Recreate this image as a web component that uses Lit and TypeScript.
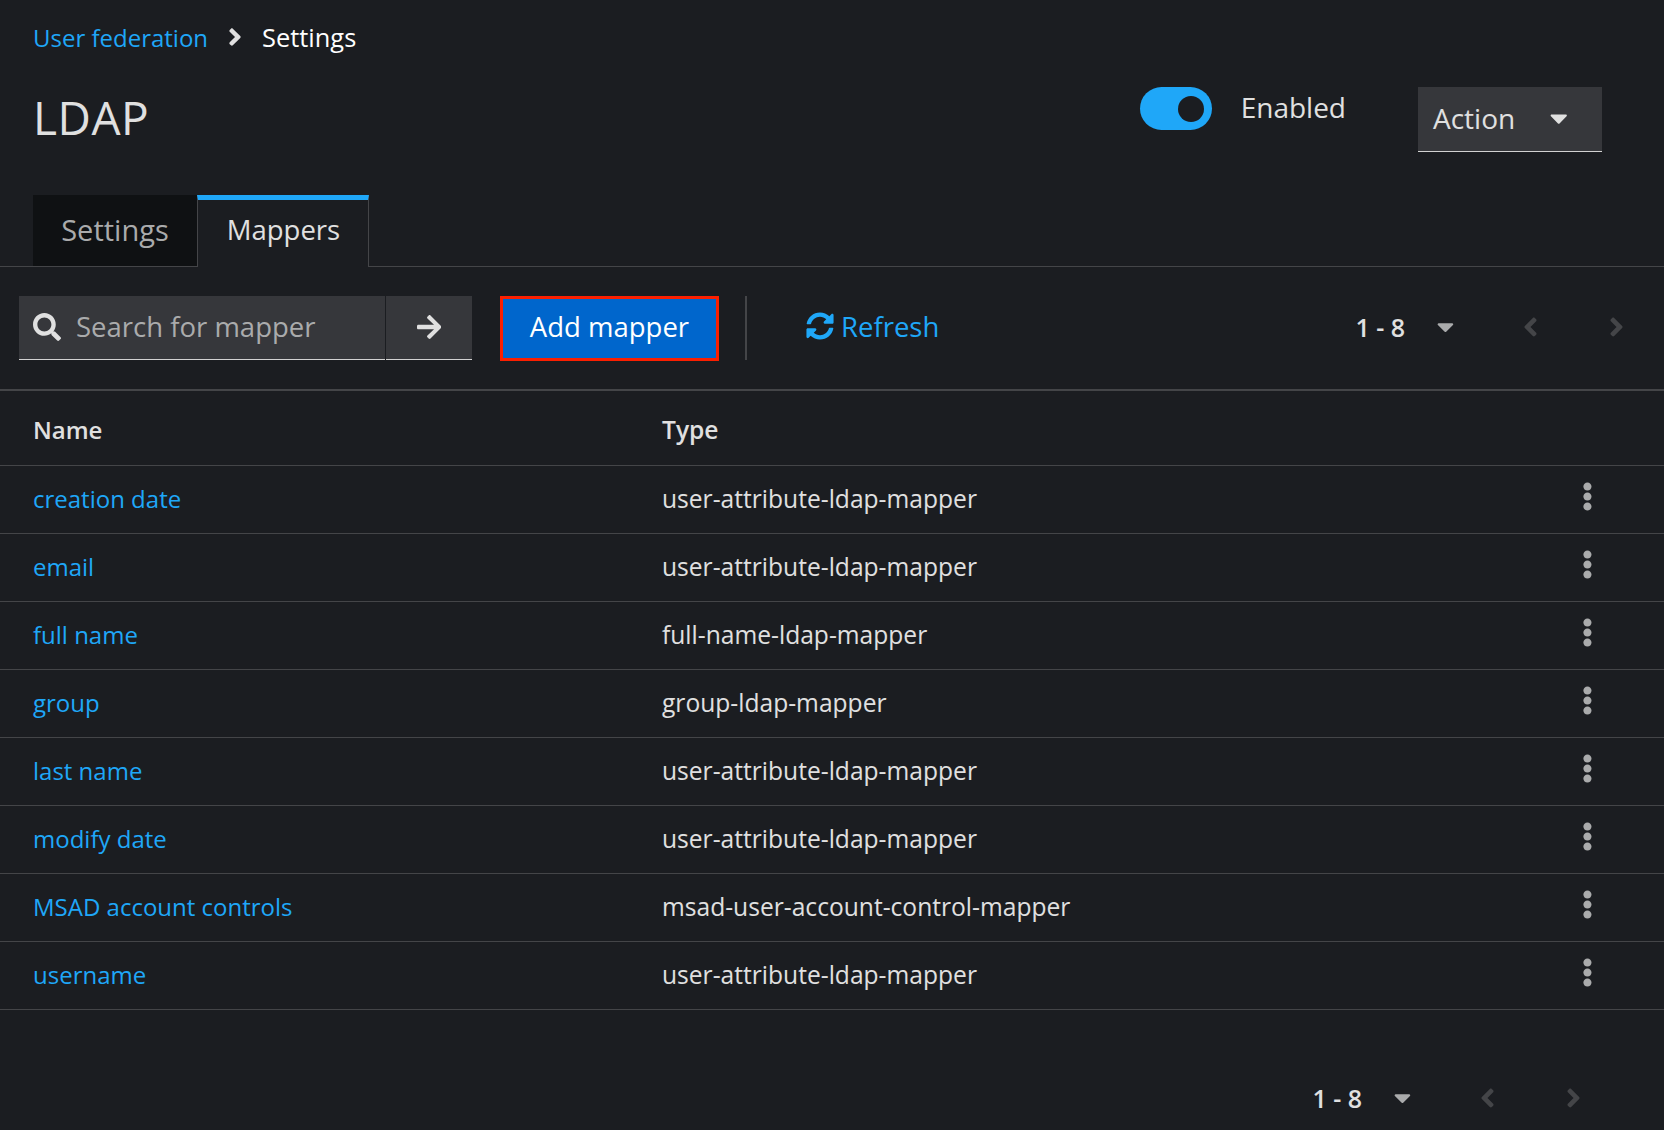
import { LitElement, html, css, svg } from "lit";
import { customElement } from "lit/decorators.js";

const ICONS = {
  search: { box: "0 0 512 512", d: "M505 442.7L405.3 343c-4.5-4.5-10.6-7-17-7H372c27.6-35.3 44-79.7 44-128C416 93.1 322.9 0 208 0S0 93.1 0 208s93.1 208 208 208c48.3 0 92.7-16.4 128-44v16.3c0 6.4 2.5 12.5 7 17l99.7 99.7c9.4 9.4 24.6 9.4 33.9 0l28.3-28.3c9.4-9.4 9.4-24.6.1-34zM208 336c-70.7 0-128-57.2-128-128 0-70.7 57.2-128 128-128 70.7 0 128 57.2 128 128 0 70.7-57.2 128-128 128z" },
  arrow: { box: "0 0 448 512", d: "M190.5 66.9l22.2-22.2c9.4-9.4 24.6-9.4 33.9 0L441 239c9.4 9.4 9.4 24.6 0 33.9L246.6 467.3c-9.4 9.4-24.6 9.4-33.9 0l-22.2-22.2c-9.5-9.5-9.3-25 .4-34.3L311.4 296H24c-13.3 0-24-10.7-24-24v-32c0-13.3 10.7-24 24-24h287.4L190.9 101.2c-9.8-9.3-10-24.8-.4-34.3z" },
  sync: { box: "0 0 512 512", d: "M370.72 133.28C339.458 104.008 298.888 87.962 255.848 88c-77.458.068-144.328 53.178-162.791 126.85-1.344 5.363-6.122 9.15-11.651 9.15H24.103c-7.498 0-13.194-6.807-11.807-14.176C33.933 94.924 134.813 8 256 8c66.448 0 126.791 26.136 171.315 68.685L463.03 40.97C478.149 25.851 504 36.559 504 57.941V192c0 13.255-10.745 24-24 24H345.941c-21.382 0-32.09-25.851-16.971-40.971l41.75-41.749zM32 296h134.059c21.382 0 32.09 25.851 16.971 40.971l-41.75 41.75c31.262 29.273 71.835 45.319 114.876 45.28 77.418-.07 144.315-53.144 162.787-126.849 1.344-5.363 6.122-9.15 11.651-9.15h57.304c7.498 0 13.194 6.807 11.807 14.176C478.067 417.076 377.187 504 256 504c-66.448 0-126.791-26.136-171.315-68.685L48.97 471.03C33.851 486.149 8 475.441 8 454.059V320c0-13.255 10.745-24 24-24z" },
  caret: { box: "0 0 320 512", d: "M31.3 192h257.3c17.8 0 26.7 21.5 14.1 34.1L174.1 354.8c-7.8 7.8-20.5 7.8-28.3 0L17.2 226.1C4.6 213.5 13.5 192 31.3 192z" },
  right: { box: "0 0 256 512", d: "M224.3 273l-136 136c-9.4 9.4-24.6 9.4-33.9 0l-22.6-22.6c-9.4-9.4-9.4-24.6 0-33.9l96.4-96.4-96.4-96.4c-9.4-9.4-9.4-24.6 0-33.9L54.3 103c9.4-9.4 24.6-9.4 33.9 0l136 136c9.5 9.4 9.5 24.6.1 34z" },
  left: { box: "0 0 256 512", d: "M31.7 239l136-136c9.4-9.4 24.6-9.4 33.9 0l22.6 22.6c9.4 9.4 9.4 24.6 0 33.9L127.9 256l96.4 96.4c9.4 9.4 9.4 24.6 0 33.9L201.7 409c-9.4 9.4-24.6 9.4-33.9 0l-136-136c-9.5-9.4-9.5-24.6-.1-34z" },
  kebab: { box: "0 0 192 512", d: "M96 184c39.8 0 72 32.2 72 72s-32.2 72-72 72-72-32.2-72-72 32.2-72 72-72zM24 80c0 39.8 32.2 72 72 72s72-32.2 72-72S135.8 8 96 8 24 40.2 24 80zm0 352c0 39.8 32.2 72 72 72s72-32.2 72-72-32.2-72-72-72-72 32.2-72 72z" },
};

type IconName = keyof typeof ICONS;

const icon = (name: IconName, cls = "") =>
  html`<svg class="icon ${cls}" viewBox=${ICONS[name].box} fill="currentColor">${svg`<path d=${ICONS[name].d}></path>`}</svg>`;

const MAPPERS = [
  { name: "creation date", type: "user-attribute-ldap-mapper" },
  { name: "email", type: "user-attribute-ldap-mapper" },
  { name: "full name", type: "full-name-ldap-mapper" },
  { name: "group", type: "group-ldap-mapper" },
  { name: "last name", type: "user-attribute-ldap-mapper" },
  { name: "modify date", type: "user-attribute-ldap-mapper" },
  { name: "MSAD account controls", type: "msad-user-account-control-mapper" },
  { name: "username", type: "user-attribute-ldap-mapper" },
];

@customElement("app-root")
export class AppRoot extends LitElement {
  static styles = css`
    :host {
      display: block;
      height: 1130px;
      overflow: hidden;
      background: #1b1d21;
      color: #e0e0e0;
      font-family: "Open Sans", "Liberation Sans", sans-serif;
      font-size: 27.5px;
    }

    .icon {
      display: block;
      height: 28px;
      flex: none;
    }

    a {
      color: #1fa7f8;
      text-decoration: none;
    }

    .breadcrumb {
      display: flex;
      align-items: center;
      height: 42px;
      padding: 16px 33px 0;
      font-size: 25.4px;
      color: #fff;
    }

    .breadcrumb a {
      font-size: 24px;
    }

    .breadcrumb .sep {
      margin: 0 20px;
      color: #e0e0e0;
    }

    .head {
      display: flex;
      align-items: flex-start;
      height: 65px;
      margin-top: 29px;
      padding: 0 62px 0 33px;
    }

    h1 {
      margin: 0 auto 0 0;
      font-size: 46px;
      font-weight: 500;
      letter-spacing: 0.5px;
      line-height: 60px;
    }

    .toggle {
      display: flex;
      justify-content: flex-end;
      align-items: center;
      width: 72px;
      height: 43px;
      padding-right: 8px;
      box-sizing: border-box;
      border-radius: 22px;
      background: #1fa7f8;
    }

    .toggle span {
      width: 26px;
      height: 26px;
      border-radius: 50%;
      background: #1b1d21;
    }

    .enabled {
      margin: 0 72px 0 29px;
      font-size: 28px;
      line-height: 41px;
    }

    .action {
      display: flex;
      align-items: center;
      justify-content: space-between;
      width: 184px;
      height: 65px;
      padding: 0 35px 2px 15px;
      box-sizing: border-box;
      background: #36373b;
      border-bottom: 1px solid #d2d2d2;
      font-size: 28px;
    }

    .tabs {
      display: flex;
      height: 71px;
      margin-top: 43px;
      padding-left: 33px;
      border-bottom: 1px solid #444548;
    }

    .tab {
      display: flex;
      align-items: center;
      justify-content: center;
      height: 71px;
      box-sizing: border-box;
    }

    .tab.off {
      width: 164px;
      padding-bottom: 2px;
      background: #0f1113;
      color: #aaabac;
      font-size: 29px;
    }

    .tab.on {
      width: 172px;
      height: 72px;
      padding: 0 0 8px 1px;
      background: #1b1d21;
      border-top: 5px solid #1fa7f8;
      border-left: 1px solid #444548;
      border-right: 1px solid #444548;
    }

    .toolbar {
      display: flex;
      align-items: flex-start;
      height: 65px;
      padding: 29px 0 28px 19px;
      border-bottom: 2px solid #444548;
    }

    .search {
      display: flex;
      align-items: center;
      width: 366px;
      height: 64px;
      padding: 0 0 2px 14px;
      box-sizing: border-box;
      background: #36373b;
      border-bottom: 1px solid #d2d2d2;
      color: #aaabac;
    }

    .search .icon {
      color: #e0e0e0;
      margin-right: 15px;
    }

    .go {
      display: flex;
      align-items: center;
      justify-content: center;
      width: 86px;
      height: 64px;
      margin-left: 1px;
      padding-bottom: 2px;
      box-sizing: border-box;
      background: #36373b;
      border-bottom: 1px solid #d2d2d2;
    }

    .add {
      display: flex;
      align-items: center;
      justify-content: center;
      width: 219px;
      height: 65px;
      margin-left: 28px;
      padding-bottom: 5px;
      box-sizing: border-box;
      border: 3px solid #fb1f00;
      background: #06c;
      color: #fff;
    }

    .divider {
      width: 2px;
      height: 64px;
      margin: 0 59px 0 26px;
      background: #444548;
    }

    .refresh {
      display: flex;
      align-items: center;
      gap: 7px;
      height: 60px;
    }

    .pager {
      display: flex;
      align-items: center;
      height: 61px;
      font-size: 25px;
      font-weight: 600;
    }

    .pager .caret {
      height: 27px;
      margin-left: 32px;
      color: #aaabac;
    }

    .pager .nav {
      height: 30px;
      color: #444548;
    }

    .pager .prev {
      margin-left: 69px;
    }

    .pager .next {
      margin-left: 71px;
    }

    .toolbar .pager {
      margin-left: auto;
      padding-right: 40px;
    }

    table {
      width: 100%;
      border-collapse: collapse;
      table-layout: fixed;
      font-size: 24.6px;
    }

    th,
    td {
      height: 65px;
      padding: 0 0 2px;
      text-align: left;
      border-bottom: 1px solid #444548;
    }

    td a {
      font-size: 24px;
    }

    th {
      height: 72px;
      padding: 2px 0 0;
      font-weight: 600;
    }

    th.name {
      font-size: 24px;
    }

    .name {
      width: 662px;
      padding-left: 33px;
      box-sizing: border-box;
    }

    .kebab {
      width: 82px;
    }

    .kebab .icon {
      height: 29px;
      margin-bottom: 4px;
      color: #aaabac;
    }

    .foot {
      display: flex;
      justify-content: flex-end;
      padding: 57px 83px 0 0;
    }
  `;

  renderPager() {
    return html`
      <div class="pager">
        <span>1 - 8</span>
        ${icon("caret", "caret")}
        ${icon("left", "nav prev")}
        ${icon("right", "nav next")}
      </div>
    `;
  }

  render() {
    return html`
      <nav class="breadcrumb">
        <a href="#">User federation</a>
        ${icon("right", "sep")}
        <span>Settings</span>
      </nav>

      <header class="head">
        <h1>LDAP</h1>
        <div class="toggle"><span></span></div>
        <div class="enabled">Enabled</div>
        <div class="action">Action ${icon("caret")}</div>
      </header>

      <div class="tabs">
        <div class="tab off">Settings</div>
        <div class="tab on">Mappers</div>
      </div>

      <div class="toolbar">
        <div class="search">${icon("search")} Search for mapper</div>
        <div class="go">${icon("arrow")}</div>
        <div class="add">Add mapper</div>
        <div class="divider"></div>
        <a class="refresh" href="#">${icon("sync")} Refresh</a>
        ${this.renderPager()}
      </div>

      <table>
        <thead>
          <tr>
            <th class="name">Name</th>
            <th>Type</th>
            <th class="kebab"></th>
          </tr>
        </thead>
        <tbody>
          ${MAPPERS.map(
            (m) => html`
              <tr>
                <td class="name"><a href="#">${m.name}</a></td>
                <td>${m.type}</td>
                <td class="kebab">${icon("kebab")}</td>
              </tr>
            `
          )}
        </tbody>
      </table>

      <div class="foot">${this.renderPager()}</div>
    `;
  }
}

declare global {
  interface HTMLElementTagNameMap {
    "app-root": AppRoot;
  }
}
